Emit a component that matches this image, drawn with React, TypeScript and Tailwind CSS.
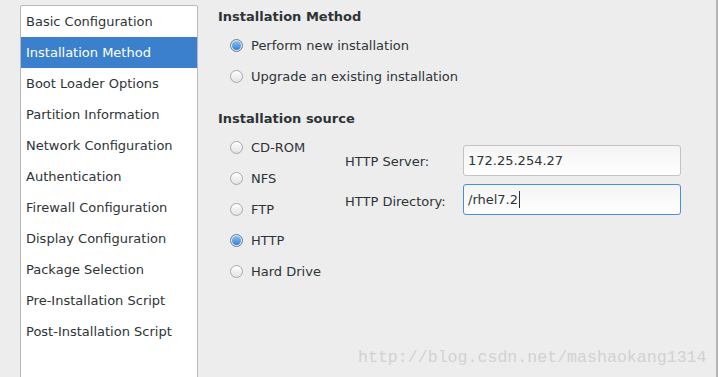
import React from "react";

const sections = [
  "Basic Configuration",
  "Installation Method",
  "Boot Loader Options",
  "Partition Information",
  "Network Configuration",
  "Authentication",
  "Firewall Configuration",
  "Display Configuration",
  "Package Selection",
  "Pre-Installation Script",
  "Post-Installation Script",
];

const Radio = ({ checked }: { checked?: boolean }) =>
  checked ? (
    <span className="w-[13px] h-[13px] rounded-full border border-[#6b7d92] bg-[#dfe6ee] flex items-center justify-center shrink-0">
      <span className="w-[9px] h-[9px] rounded-full bg-gradient-to-b from-[#8fc0f4] to-[#2f7fd6]" />
    </span>
  ) : (
    <span className="w-[13px] h-[13px] rounded-full border border-[#a9a9a9] bg-gradient-to-b from-[#ffffff] to-[#e2e2e2] shrink-0" />
  );

const RadioRow = ({ label, checked }: { label: string; checked?: boolean }) => (
  <div className="h-[31px] flex items-center gap-[8px]">
    <Radio checked={checked} />
    <span>{label}</span>
  </div>
);

export default function App() {
  return (
    <div
      className="relative w-[718px] h-[377px] overflow-hidden bg-[#ededed] text-[#2e3436] text-[13px] flex"
      style={{ fontFamily: '"DejaVu Sans", sans-serif' }}
    >
      {/* Sidebar */}
      <div className="ml-[20px] mt-[5px] w-[178px] h-[400px] bg-white border border-[#b8b8b8] rounded-t-[2px] shrink-0">
        {sections.map((s, i) => (
          <div
            key={s}
            className={
              "h-[31px] flex items-center pl-[5px] " +
              (i === 1 ? "bg-[#3b80cc] text-white" : "")
            }
          >
            {s}
          </div>
        ))}
      </div>

      {/* Main panel */}
      <div className="flex-1 pl-[20px] pt-[7px]">
        <div className="h-[20px] flex items-center font-bold">Installation Method</div>
        <div className="mt-[3px] pl-[12px]">
          <RadioRow label="Perform new installation" checked />
          <RadioRow label="Upgrade an existing installation" />
        </div>

        <div className="mt-[17px] h-[20px] flex items-center font-bold">Installation source</div>
        <div className="mt-[3px] pl-[12px] flex">
          <div className="w-[115px]">
            <RadioRow label="CD-ROM" />
            <RadioRow label="NFS" />
            <RadioRow label="FTP" />
            <RadioRow label="HTTP" checked />
            <RadioRow label="Hard Drive" />
          </div>
          <div className="mt-[13px] flex flex-col gap-[8px]">
            <div className="flex items-center">
              <span className="w-[118px] pt-[3px]">HTTP Server:</span>
              <div className="w-[218px] h-[31px] flex items-center pl-[4px] border border-[#c3c3c3] rounded-[3px] bg-gradient-to-b from-[#f4f4f4] to-[#ffffff]">
                172.25.254.27
              </div>
            </div>
            <div className="flex items-center">
              <span className="w-[118px] pt-[4px]">HTTP Directory:</span>
              <div className="w-[218px] h-[31px] flex items-center pl-[4px] border border-[#4a90d9] rounded-[3px] bg-gradient-to-b from-[#f4f4f4] to-[#ffffff]">
                /rhel7.2
                <span className="ml-[1px] w-[1px] h-[17px] bg-[#2e3436]" />
              </div>
            </div>
          </div>
        </div>
      </div>

      {/* Window edge */}
      <div className="w-[2px] h-full bg-[#b4b4b4] shrink-0" />

      {/* Watermark */}
      <div
        className="absolute left-[358px] top-[348px] text-[16.6px] text-[#d2d2d2] leading-[20px]"
        style={{ fontFamily: '"Liberation Mono", monospace' }}
      >
        http://blog.csdn.net/mashaokang1314
      </div>
    </div>
  );
}
